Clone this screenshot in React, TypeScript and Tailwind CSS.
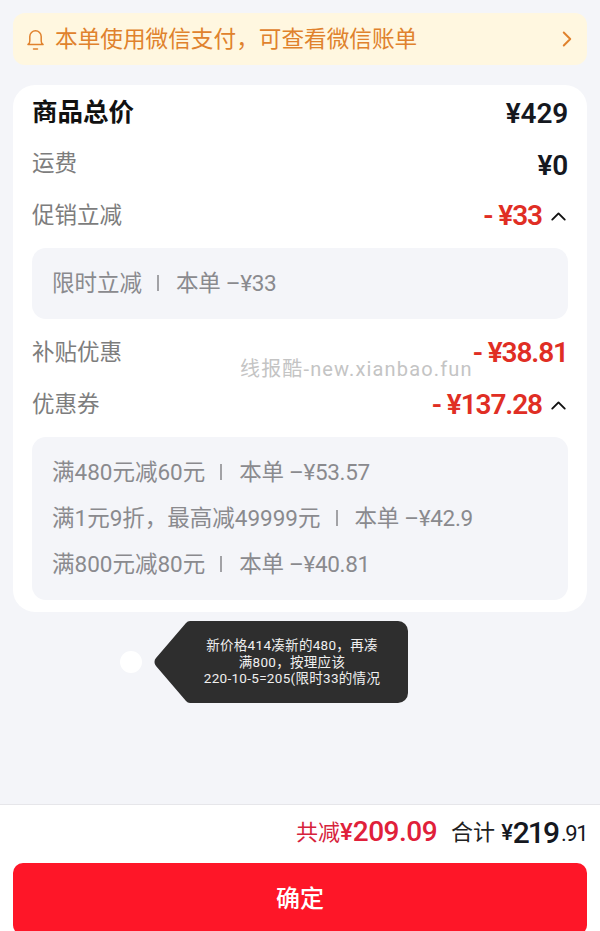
import { ChevronRight, ChevronUp } from 'lucide-react'

const cjk = "font-['Roboto','Noto_Sans_CJK_SC',sans-serif]"

function Row({ label, value, red, open, strong, low }: { label: string; value: string; red?: boolean; open?: boolean; strong?: boolean; low?: boolean }) {
  return (
    <div className="flex h-[52px] items-center justify-between">
      <span className={strong ? 'text-[25.5px] font-semibold text-[#111]' : 'text-[22.5px] text-[#7d7d7d]'}>{label}</span>
      <span className={`flex items-center ${low ? 'mt-[4px]' : ''}`}>
        <span className={`text-[28px] font-semibold ${red ? 'tracking-[-1.1px] text-[#e02e24]' : 'tracking-[-0.2px] text-[#15181f]'}`}>{value}</span>
        {open && <ChevronUp className="-mr-[3px] ml-[4px] h-[25px] w-[25px] text-[#111]" strokeWidth={1.8} />}
      </span>
    </div>
  )
}

function Detail({ name, amount }: { name: string; amount: string }) {
  return (
    <div className="flex h-[46px] items-center text-[22.5px] text-[#8a8a8e]">
      <span>{name}</span>
      <span className="mb-[2px] ml-[15px] mr-[17px] h-[16px] w-[2px] bg-[#a2a2a6]" />
      <span className="tracking-[-0.3px]">本单 {amount}</span>
    </div>
  )
}

export default function App() {
  return (
    <div className={`relative flex h-[931px] w-[600px] flex-col overflow-hidden bg-[#f4f5f9] ${cjk}`}>
      <div className="flex-1 px-[13px] pt-[13px]">
        <div className="flex h-[52px] items-center rounded-[12px] bg-[#fff7e0] pl-[14px] pr-[7px] text-[#e0822d]">
          <svg width="17" height="23" viewBox="0 0 17 23" fill="none" stroke="currentColor" strokeWidth="1.5" strokeLinecap="round" strokeLinejoin="round">
            <path d="M1 16.5c1.3-.8 1.8-2 1.8-3.6V8.5a5.7 5.7 0 0 1 11.4 0v4.4c0 1.6.5 2.8 1.8 3.6Z" />
            <path d="M6.5 21h4" />
          </svg>
          <span className="ml-[11px] mt-[1px] flex-1 text-[22.65px]">本单使用微信支付，可查看微信账单</span>
          <ChevronRight className="h-[26px] w-[26px]" strokeWidth={1.8} />
        </div>

        <div className="mt-[20px] rounded-[22px] bg-white px-[19px] pb-[12px] pt-[1px]">
          <Row label="商品总价" value="¥429" strong low />
          <Row label="运费" value="¥0" low />
          <Row label="促销立减" value="- ¥33" red open />
          <div className="mb-[8px] mt-[6px] flex h-[71px] items-center rounded-[14px] bg-[#f4f5f9] px-[20px]">
            <Detail name="限时立减" amount="–¥33" />
          </div>
          <Row label="补贴优惠" value="- ¥38.81" red />
          <Row label="优惠券" value="- ¥137.28" red open />
          <div className="mt-[6px] rounded-[14px] bg-[#f4f5f9] px-[20px] pb-[12px] pt-[13px]">
            <Detail name="满480元减60元" amount="–¥53.57" />
            <Detail name="满1元9折，最高减49999元" amount="–¥42.9" />
            <Detail name="满800元减80元" amount="–¥40.81" />
          </div>
        </div>
      </div>

      <div className="h-[127px] border-t border-[#e6e6ea] bg-white px-[13px]">
        <div className="flex h-[58px] items-center justify-end pb-[4px]">
          <span className="text-[22px] text-[#d6233b]">共减</span>
          <span className="text-[24px] font-medium text-[#e0203a]">¥</span>
          <span className="text-[28px] font-medium tracking-[-0.5px] text-[#e0203a]">209.09</span>
          <span className="ml-[14px] text-[22px] text-[#222]">合计</span>
          <span className="ml-[6px] text-[22px] font-medium text-[#15181f]">¥</span>
          <span className="text-[30px] font-medium tracking-[-2px] text-[#15181f]">219</span>
          <span className="ml-[3px] mt-[3px] text-[22px] tracking-[-1.5px] text-[#15181f]">.91</span>
        </div>
        <button type="button" className="h-[72px] w-full rounded-[10px] bg-[#fe1628] text-[24px] font-medium text-white">
          确定
        </button>
      </div>

      <div className="absolute left-[120px] top-[651px] h-[22px] w-[22px] rounded-full bg-white" />
      <div className="absolute left-[154px] top-[621px]">
        <svg width="254" height="82" viewBox="0 0 254 82" className="absolute left-0 top-0">
          <path d="M36 0H244a10 10 0 0 1 10 10V72a10 10 0 0 1-10 10H36a6 6 0 0 1-4-2L2 45a6 6 0 0 1 0-8L32 2a6 6 0 0 1 4-2Z" fill="#2e2e2e" />
        </svg>
        <div className="relative flex h-[82px] w-[254px] items-center justify-center pl-[36px] pr-[14px] text-center text-[13.5px] leading-[16.5px] tracking-[0.3px] text-[#f0f0f0]">
          <p>新价格414凑新的480，再凑<br />满800，按理应该<br />220-10-5=205(限时33的情况</p>
        </div>
      </div>
      <div className="absolute left-[240px] top-[357px] text-[20px] leading-[24px] tracking-[1.15px] text-[#c4c4c4]">线报酷-new.xianbao.fun</div>
    </div>
  )
}
